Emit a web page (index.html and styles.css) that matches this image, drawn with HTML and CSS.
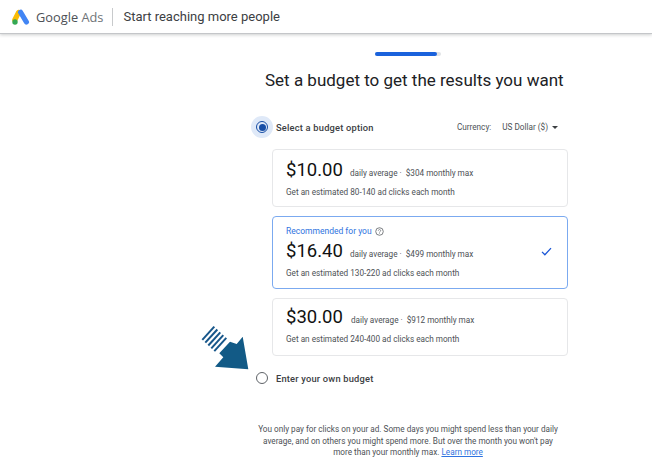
FILE: index.html
```html
<!DOCTYPE html>
<html lang="en">
<head>
    <meta charset="UTF-8">
    <title>Google Ads budget</title>
    <link rel="stylesheet" href="styles.css">
</head>
<body>
    <div class="top-bar">
        <svg class="ads-logo" width="18" height="16" viewBox="0 0 18 16">
            <line x1="6.6" y1="3.4" x2="2.8" y2="11" stroke="#fbbc04" stroke-width="5.2" stroke-linecap="round"/>
            <line x1="8.6" y1="3.2" x2="14.4" y2="13" stroke="#4285f4" stroke-width="5.2" stroke-linecap="round"/>
            <circle cx="3" cy="13" r="2.7" fill="#34a853"/>
        </svg>
        <div class="brand"><span class="brand-google">Google</span> <span class="brand-ads">Ads</span></div>
        <div class="top-divider"></div>
        <div class="top-title">Start reaching more people</div>
    </div>

    <div class="progress"><div class="progress-fill"></div></div>
    <h1 class="main-title">Set a budget to get the results you want</h1>

    <div class="budget-cont">
        <div class="option-row">
            <div class="radio-halo"><div class="radio radio-on"><div class="radio-dot"></div></div></div>
            <div class="option-label">Select a budget option</div>
            <div class="currency">
                <span class="currency-label">Currency:</span>
                <span>US Dollar ($)</span>
                <span class="caret"></span>
            </div>
        </div>

        <div class="budget-card">
            <div class="price-row">
                <span class="price">$10.00</span>
                <span class="price-note">daily average ·&nbsp; $304 monthly max</span>
            </div>
            <div class="estimate">Get an estimated 80-140 ad clicks each month</div>
        </div>

        <div class="budget-card budget-card-selected">
            <div class="recommended">
                Recommended for you
                <svg width="9" height="9" viewBox="0 0 10 10" fill="none">
                    <circle cx="5" cy="5" r="4.2" stroke="#5f6368" stroke-width="0.9"/>
                    <path d="M3.7 4a1.3 1.3 0 1 1 2 1.1c-.5.3-.7.5-.7 1" stroke="#5f6368" stroke-width="0.8"/>
                    <circle cx="5" cy="7.4" r="0.5" fill="#5f6368"/>
                </svg>
            </div>
            <div class="price-row">
                <span class="price">$16.40</span>
                <span class="price-note">daily average ·&nbsp; $499 monthly max</span>
            </div>
            <div class="estimate">Get an estimated 130-220 ad clicks each month</div>
            <svg class="check" width="11" height="9" viewBox="0 0 12 10" fill="none">
                <path d="M1 5.4L4.2 8.6L11 1.2" stroke="#1a56d6" stroke-width="1.4"/>
            </svg>
        </div>

        <div class="budget-card budget-card-last">
            <div class="price-row">
                <span class="price price-wide">$30.00</span>
                <span class="price-note">daily average ·&nbsp; $912 monthly max</span>
            </div>
            <div class="estimate">Get an estimated 240-400 ad clicks each month</div>
        </div>

        <div class="option-row own-row">
            <div class="radio-halo radio-halo-off"><div class="radio"></div></div>
            <div class="option-label">Enter your own budget</div>
        </div>
    </div>

    <p class="footnote">You only pay for clicks on your ad. Some days you might spend less than your daily average, and on others you might spend more. But over the month you won't pay more than your monthly max. <a href="#">Learn more</a></p>

    <!-- arrow lies over the page, pointing at the radio -->
    <svg class="arrow" width="50" height="48" viewBox="0 0 50 48">
        <g stroke="#17568a" stroke-width="2">
            <line x1="2.3" y1="15.9" x2="14.3" y2="2.7"/>
            <line x1="5.3" y1="18.7" x2="17.3" y2="5.5"/>
            <line x1="8.3" y1="21.5" x2="20.3" y2="8.3"/>
            <line x1="11.3" y1="24.3" x2="23.3" y2="11.1"/>
            <line x1="14.3" y1="27.1" x2="26.3" y2="13.9"/>
        </g>
        <path d="M30 17.7L19.3 29.3L23.3 33.3L15 42.7L48.3 45.3L42.7 12.7L36.7 20Z" fill="#125a86"/>
    </svg>
</body>
</html>
```

FILE: styles.css
```css
body {
    margin: 0;
    height: 470px;
    overflow: hidden;
    position: relative;
    background-color: #fff;
    font-family: "Roboto", "Liberation Sans", sans-serif;
    color: #3c4043;
}

.top-bar {
    display: flex;
    align-items: center;
    height: 33px;
    padding-left: 12px;
    border-bottom: 1px solid #c4c6c9;
    box-shadow: 0 1px 3px rgba(60, 64, 67, 0.25);
}

.ads-logo {
    margin-right: 6px;
}

.brand {
    font-family: "Open Sans", sans-serif;
    font-size: 12.8px;
    color: #4d5156;
    white-space: nowrap;
}

.brand-ads {
    color: #6f7478;
}

.top-divider {
    width: 1px;
    height: 18px;
    margin: 0 10px 0 9px;
    background-color: #c8cacc;
}

.top-title {
    font-size: 13px;
    color: #3c4043;
    white-space: nowrap;
}

.progress {
    width: 66px;
    height: 4px;
    margin: 18px 0 0 375px;
    border-radius: 2px;
    background-color: #e1e3e6;
}

.progress-fill {
    width: 62px;
    height: 4px;
    border-radius: 2px;
    background-color: #1a62dc;
}

.main-title {
    margin: 12px 0 0 0;
    padding-left: 265px;
    font-size: 17px;
    font-weight: 400;
    line-height: 24px;
    color: #202124;
    white-space: nowrap;
}

.budget-cont {
    width: 316px;
    margin: 24px 0 0 252px;
}

.option-row {
    display: flex;
    align-items: center;
    height: 22px;
}

.radio-halo {
    display: flex;
    align-items: center;
    justify-content: center;
    width: 22px;
    height: 22px;
    margin-left: -1px;
    border-radius: 50%;
    background-color: #dfe9f8;
}

.radio-halo-off {
    background-color: transparent;
}

.radio {
    display: flex;
    align-items: center;
    justify-content: center;
    box-sizing: border-box;
    width: 12px;
    height: 12px;
    border: 1.3px solid #5f6368;
    border-radius: 50%;
}

.radio-on {
    border-color: #174ea6;
}

.radio-dot {
    width: 7px;
    height: 7px;
    border-radius: 50%;
    background-color: #174ea6;
}

.option-label {
    margin-left: 3px;
    font-size: 9.3px;
    font-weight: 500;
    color: #3c4043;
    letter-spacing: 0.2px;
}

.currency {
    display: flex;
    align-items: center;
    margin-left: auto;
    margin-right: 10px;
    font-size: 8.2px;
    color: #4d5156;
}

.currency-label {
    margin-right: 11px;
}

.caret {
    width: 0;
    height: 0;
    margin-left: 4px;
    border-left: 3px solid transparent;
    border-right: 3px solid transparent;
    border-top: 3px solid #3c4043;
}

.budget-card {
    position: relative;
    box-sizing: border-box;
    height: 58px;
    margin: 0 0 9px 20px;
    padding: 9px 13px 0;
    border: 1px solid #e6e7e9;
    border-radius: 4px;
}

.option-row + .budget-card {
    margin-top: 11px;
}

.budget-card-selected {
    height: 73px;
    padding-top: 9px;
    border: 1px solid #7baaf0;
}

.budget-card-last {
    padding-top: 7px;
}

.price-row {
    display: flex;
    align-items: baseline;
    white-space: nowrap;
}

.price {
    font-size: 18.5px;
    line-height: 23px;
    color: #111;
    margin-right: 7px;
}

.price-wide {
    margin-right: 8px;
}

.price-note {
    font-size: 8.2px;
    color: #4d5156;
}

.estimate {
    margin-top: 5px;
    font-size: 8.2px;
    color: #4d5156;
}

.recommended {
    display: flex;
    align-items: center;
    gap: 3px;
    margin-bottom: 3px;
    font-size: 8.5px;
    line-height: 11px;
    color: #2f73e0;
}

.check {
    position: absolute;
    top: 30px;
    right: 15px;
}

.own-row {
    margin-top: 11px;
}

.footnote {
    width: 306px;
    margin: 35px 0 0 255px;
    font-size: 8.2px;
    line-height: 11.6px;
    text-align: center;
    color: #4d5156;
}

.footnote a {
    color: #2f73e0;
}

.arrow {
    position: absolute;
    left: 200px;
    top: 324px;
}
```
